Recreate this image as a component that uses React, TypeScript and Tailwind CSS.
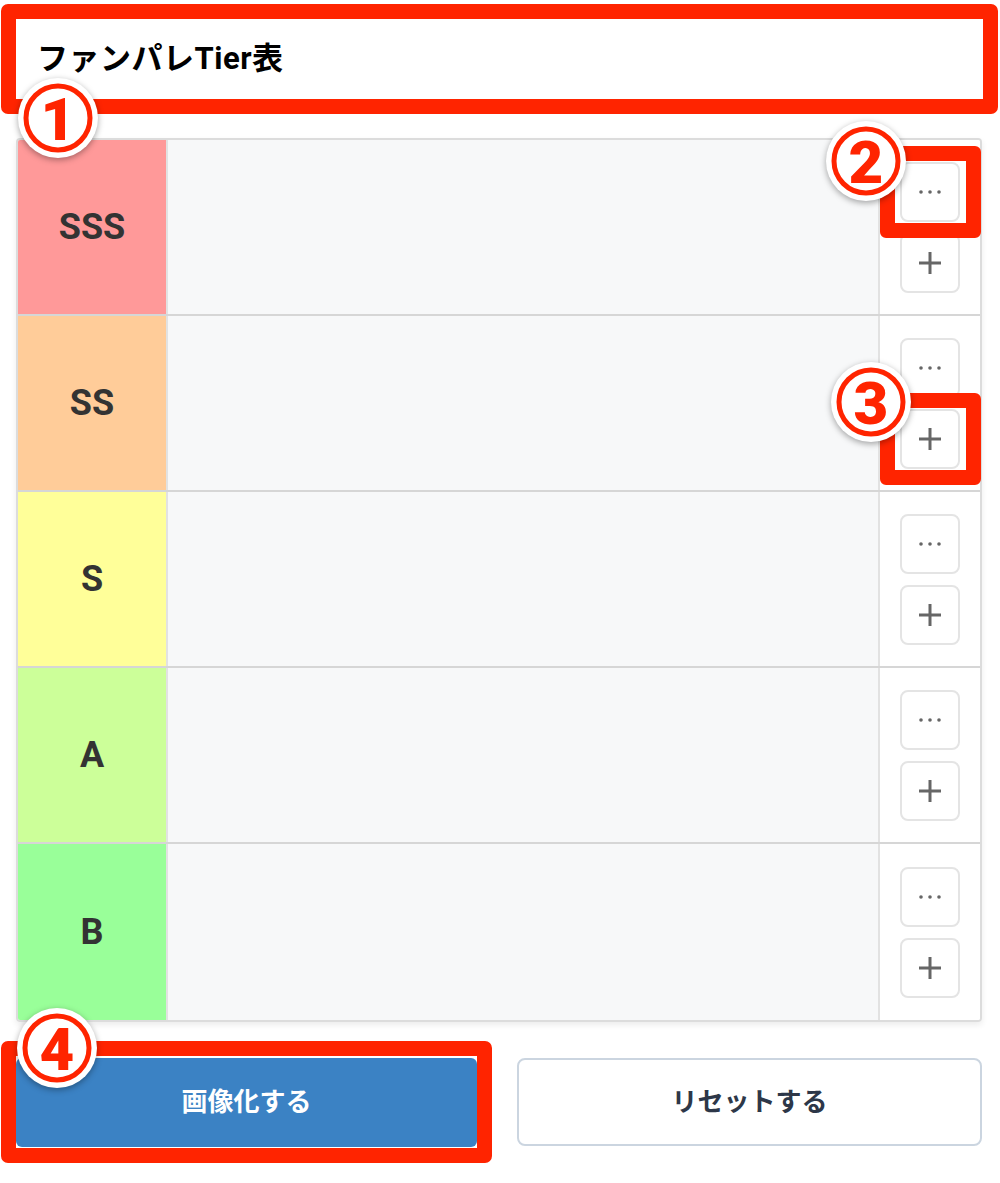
import React from "react";

const tiers = [
  { label: "SSS", color: "bg-[#ff9999]" },
  { label: "SS", color: "bg-[#ffcc99]" },
  { label: "S", color: "bg-[#ffff99]" },
  { label: "A", color: "bg-[#ccff99]" },
  { label: "B", color: "bg-[#99ff99]" },
];

function Badge({ n, className }: { n: string; className: string }) {
  return (
    <svg
      width="88"
      height="88"
      viewBox="0 0 88 88"
      className={`absolute drop-shadow-[0_2px_3px_rgba(0,0,0,0.35)] ${className}`}
    >
      <circle cx="44" cy="44" r="40" fill="#fff" />
      <circle cx="44" cy="44" r="32" fill="none" stroke="#ff2400" strokeWidth="5" />
      <text
        x="44"
        y="66"
        textAnchor="middle"
        fontSize="60"
        fontWeight="900"
        fontFamily="Roboto, 'Liberation Sans', sans-serif"
        fill="#ff2400"
        stroke="#fff"
        strokeWidth="2"
        paintOrder="stroke"
      >
        {n}
      </text>
    </svg>
  );
}

function DotsIcon() {
  return (
    <svg width="24" height="6" viewBox="0 0 24 6">
      <circle cx="3" cy="3" r="1.8" fill="#666" />
      <circle cx="12" cy="3" r="1.8" fill="#666" />
      <circle cx="21" cy="3" r="1.8" fill="#666" />
    </svg>
  );
}

function PlusIcon() {
  return (
    <svg width="24" height="24" viewBox="0 0 24 24">
      <path d="M12 1v22M1 12h22" stroke="#666" strokeWidth="3" />
    </svg>
  );
}

export default function App() {
  return (
    <div className="relative w-[1000px] h-[1183px] bg-white font-['Roboto','Noto_Sans_CJK_JP',sans-serif]">
      {/* title */}
      <header className="h-[138px] pl-[37px] pt-[38px]">
        <h1 className="text-[31px] leading-[42px] font-bold text-black tracking-[0.5px]">
          ファンパレTier表
        </h1>
      </header>

      {/* tier table */}
      <div className="ml-[16px] w-[966px] border-2 border-[#dcdcdc] rounded-[4px] shadow-[0_3px_6px_rgba(0,0,0,0.08)] overflow-hidden">
        {tiers.map((t, i) => (
          <div
            key={t.label}
            className={`flex h-[176px] ${i < tiers.length - 1 ? "border-b-2 border-[#d6d6d6]" : "h-[174px]"}`}
          >
            <div
              className={`w-[148px] flex items-center justify-center text-[36px] font-bold text-[#333] ${t.color}`}
            >
              {t.label}
            </div>
            <div className="flex-1 bg-[#f7f8f9] border-l-2 border-r-2 border-[#e2e2e2]" />
            <div className="w-[100px] bg-white flex flex-col items-center justify-center gap-[11px]">
              <button className="w-[60px] h-[60px] rounded-[8px] border-2 border-[#e4e4e4] bg-white flex items-center justify-center">
                <DotsIcon />
              </button>
              <button className="w-[60px] h-[60px] rounded-[8px] border-2 border-[#e4e4e4] bg-white flex items-center justify-center">
                <PlusIcon />
              </button>
            </div>
          </div>
        ))}
      </div>

      {/* actions */}
      <div className="ml-[16px] w-[966px] mt-[36px] flex gap-[40px]">
        <button className="flex-1 h-[89px] rounded-[6px] bg-[#3b82c4] text-white text-[26px] font-bold">
          画像化する
        </button>
        <button className="flex-1 h-[88px] rounded-[8px] border-2 border-[#cbd5e0] bg-white text-[#2d3748] text-[26px] font-bold">
          リセットする
        </button>
      </div>

      {/* annotations */}
      <div className="absolute left-[1px] top-[4px] w-[997px] h-[110px] border-[15px] border-[#ff2400] rounded-[7px]" />
      <div className="absolute left-[880px] top-[146px] w-[101px] h-[92px] border-[15px] border-[#ff2400] rounded-[6px]" />
      <div className="absolute left-[880px] top-[393px] w-[101px] h-[92px] border-[15px] border-[#ff2400] rounded-[6px]" />
      <div className="absolute left-[1px] top-[1041px] w-[491px] h-[122px] border-[15px] border-[#ff2400] rounded-[7px]" />

      <Badge n="1" className="left-[14px] top-[74px]" />
      <Badge n="2" className="left-[822px] top-[117px]" />
      <Badge n="3" className="left-[827px] top-[358px]" />
      <Badge n="4" className="left-[13px] top-[1004px]" />
    </div>
  );
}
